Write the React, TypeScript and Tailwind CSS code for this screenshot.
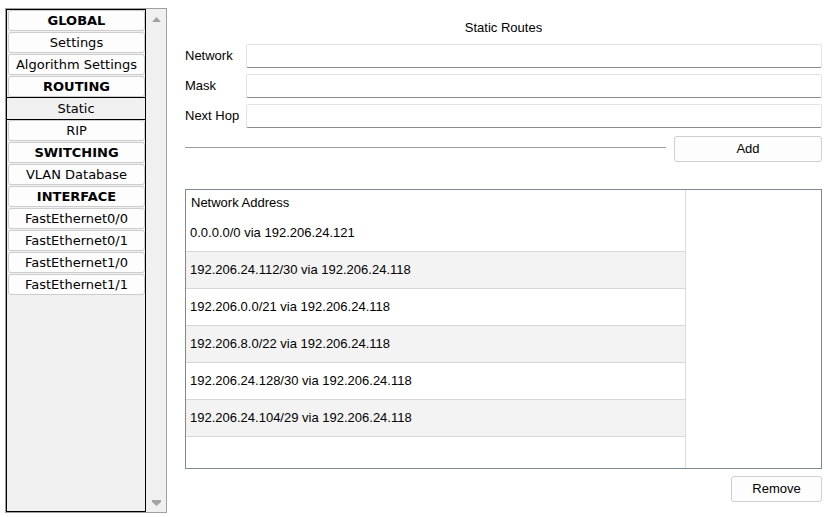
const menu = [
  { label: 'GLOBAL', header: true },
  { label: 'Settings' },
  { label: 'Algorithm Settings' },
  { label: 'ROUTING', header: true },
  { label: 'Static', selected: true },
  { label: 'RIP' },
  { label: 'SWITCHING', header: true },
  { label: 'VLAN Database' },
  { label: 'INTERFACE', header: true },
  { label: 'FastEthernet0/0' },
  { label: 'FastEthernet0/1' },
  { label: 'FastEthernet1/0' },
  { label: 'FastEthernet1/1' },
]

const routes = [
  '0.0.0.0/0 via 192.206.24.121',
  '192.206.24.112/30 via 192.206.24.118',
  '192.206.0.0/21 via 192.206.24.118',
  '192.206.8.0/22 via 192.206.24.118',
  '192.206.24.128/30 via 192.206.24.118',
  '192.206.24.104/29 via 192.206.24.118',
]

const fields = ['Network', 'Mask', 'Next Hop']

function Sidebar() {
  return (
    <div className="ml-[5px] mt-[8px] w-[162px] h-[505px] border border-[#a0a0a0] flex bg-[#f0f0f0]">
      {/* Menu list */}
      <div className="w-[140px] h-full border border-black pl-px flex flex-col font-['DejaVu_Sans',sans-serif] text-[13px] text-black">
        {menu.map((m) =>
          m.selected ? (
            <div
              key={m.label}
              className="h-[23px] -mt-px -ml-[2px] -mr-px border border-black bg-[#f0f0f0] flex items-center justify-center"
            >
              {m.label}
            </div>
          ) : (
            <div
              key={m.label}
              className={`h-[21px] mb-px border border-[#cdcdcd] rounded-[3px] bg-[#fdfdfd] flex items-center justify-center whitespace-nowrap ${
                m.header ? 'font-bold' : ''
              }`}
            >
              {m.label}
            </div>
          )
        )}
      </div>

      {/* Scrollbar */}
      <div className="w-[20px] h-full flex flex-col items-center justify-between pt-[8px] pb-[6px]">
        <svg width="9" height="5" viewBox="0 0 9 5">
          <path d="M4.5 0 L9 5 L0 5 Z" fill="#a3a3a3" />
        </svg>
        <svg width="9" height="6" viewBox="0 0 9 6">
          <path d="M0 0 L9 0 L9 2 L4.5 6 L0 2 Z" fill="#a3a3a3" />
        </svg>
      </div>
    </div>
  )
}

function Button({ label, className }: { label: string; className: string }) {
  return (
    <div
      className={`h-[26px] border border-[#cfcfcf] rounded-[3px] bg-[#fdfdfd] flex items-center justify-center ${className}`}
    >
      {label}
    </div>
  )
}

export default function App() {
  return (
    <div className="w-[828px] h-[517px] bg-white flex overflow-hidden">
      <Sidebar />

      {/* Static Routes panel */}
      <div className="ml-[18px] w-[637px] pt-[20px] flex flex-col font-['Liberation_Sans',Arial,sans-serif] text-[13px] text-black">
        <div className="h-[16px] leading-[16px] text-center mb-[8px]">Static Routes</div>

        {fields.map((f, i) => (
          <div key={f} className={`flex items-center ${i > 0 ? 'mt-[6px]' : ''}`}>
            <div className="w-[61px]">{f}</div>
            <div className="w-[576px] h-[24px] bg-white border border-[#e3e3e3] border-b-[#8a8a8a] rounded-[2px]" />
          </div>
        ))}

        <div className="mt-[8px] flex items-start">
          <div className="flex-1 h-px bg-[#a0a0a0] mt-[11px] mr-[8px]" />
          <Button label="Add" className="w-[148px]" />
        </div>

        {/* Route list */}
        <div className="mt-[27px] h-[280px] border border-[#828790] bg-white">
          <div className="w-[500px] h-full border-r border-[#dadada]">
            <div className="h-[25px] pl-[5px] pt-px flex items-center">Network Address</div>
            {routes.map((r, i) => (
              <div
                key={r}
                className={`h-[37px] pl-[4px] flex items-center border-b border-[#d7d7d7] ${
                  i % 2 === 1 ? 'bg-[#f3f3f3]' : 'bg-white'
                }`}
              >
                {r}
              </div>
            ))}
          </div>
        </div>

        <div className="mt-[7px] flex justify-end">
          <Button label="Remove" className="w-[91px]" />
        </div>
      </div>
    </div>
  )
}
